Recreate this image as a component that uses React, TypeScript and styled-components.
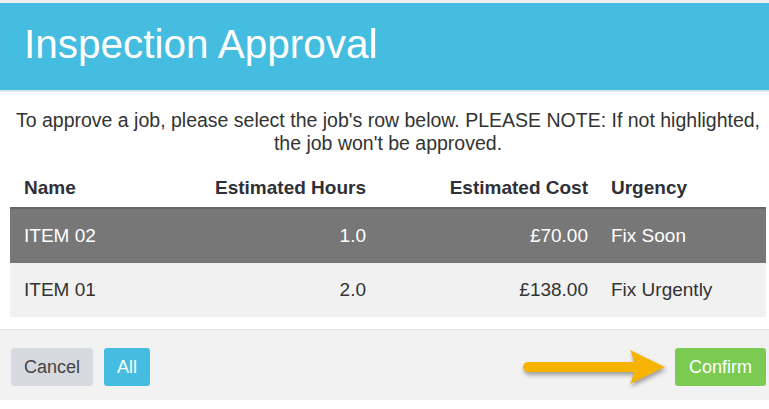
import styled, { createGlobalStyle, css } from "styled-components";

const GlobalStyle = createGlobalStyle`
  html, body {
    margin: 0;
    padding: 0;
    background: #fff;
  }
  body {
    font-family: "Liberation Sans", Arial, Helvetica, sans-serif;
    color: #333;
  }
  * {
    box-sizing: border-box;
  }
`;

interface Job {
  name: string;
  hours: string;
  cost: string;
  urgency: string;
  selected?: boolean;
}

const jobs: Job[] = [
  { name: "ITEM 02", hours: "1.0", cost: "£70.00", urgency: "Fix Soon", selected: true },
  { name: "ITEM 01", hours: "2.0", cost: "£138.00", urgency: "Fix Urgently" },
];

const Arrow = () => (
  <ArrowSvg width="150" height="44" viewBox="0 0 150 44">
    <line x1="11" y1="22" x2="118" y2="22" stroke="#F6B400" strokeWidth="10" strokeLinecap="round" />
    <path d="M113 5 L148 22 L113 39 Q121 22 113 5 Z" fill="#F6B400" />
  </ArrowSvg>
);

export default function App() {
  return (
    <>
      <GlobalStyle />
      <Modal>
        <Header>
          <Title>Inspection Approval</Title>
        </Header>
        <Body>
          <Note>
            To approve a job, please select the job's row below. PLEASE NOTE: If not highlighted,
            <br />
            the job won't be approved.
          </Note>
          <Table>
            <HeadRow>
              <Cell>Name</Cell>
              <Cell $right>Estimated Hours</Cell>
              <Cell $right>Estimated Cost</Cell>
              <Cell>Urgency</Cell>
            </HeadRow>
            {jobs.map((job) => (
              <Row key={job.name} $selected={job.selected}>
                <Cell>{job.name}</Cell>
                <Cell $right>{job.hours}</Cell>
                <Cell $right>{job.cost}</Cell>
                <Cell>{job.urgency}</Cell>
              </Row>
            ))}
          </Table>
        </Body>
        <Footer>
          <Button $variant="cancel">Cancel</Button>
          <Button $variant="info">All</Button>
          <Spacer />
          <Arrow />
          <Button $variant="confirm">Confirm</Button>
        </Footer>
      </Modal>
    </>
  );
}

const Modal = styled.div`
  width: 769px;
  border-top: 3px solid #eceef0;
  display: flex;
  flex-direction: column;
`;

const Header = styled.header`
  height: 89px;
  background: #45bde1;
  border-bottom: 2px solid #dde7ee;
  display: flex;
  align-items: center;
  padding: 0 24px 4px;
`;

const Title = styled.h1`
  margin: 0;
  font-size: 40.5px;
  font-weight: 400;
  color: #fff;
`;

const Body = styled.section`
  padding: 17px 3px 0 10px;
`;

const Note = styled.p`
  margin: 0;
  font-size: 19.5px;
  line-height: 23px;
  text-align: center;
  color: #333;
`;

const Table = styled.div`
  margin-top: 10px;
  display: flex;
  flex-direction: column;
`;

const grid = css`
  display: grid;
  grid-template-columns: 183px 185px 222px 1fr;
  align-items: center;
`;

const HeadRow = styled.div`
  ${grid};
  height: 44px;
  border-bottom: 2px solid #666;
  padding-top: 4px;
  font-size: 19px;
  font-weight: 700;
  color: #2f3038;
`;

const Row = styled.div<{ $selected?: boolean }>`
  ${grid};
  height: 54px;
  font-size: 19px;
  background: ${(p) => (p.$selected ? "#777777" : "#f1f1f1")};
  color: ${(p) => (p.$selected ? "#fff" : "#333")};
`;

const Cell = styled.div<{ $right?: boolean }>`
  padding: 0 12px 0 14px;
  text-align: ${(p) => (p.$right ? "right" : "left")};
  white-space: nowrap;

  &:last-child {
    padding-left: 11px;
  }
`;

const Footer = styled.footer`
  margin-top: 12px;
  display: flex;
  align-items: center;
  gap: 11px;
  padding: 15px 3px 11px 11px;
  background: #f2f2f2;
  border-top: 1px solid #e4e4ea;
`;

const Spacer = styled.div`
  flex: 1;
`;

const ArrowSvg = styled.svg`
  margin-right: -3px;
  filter: drop-shadow(1px 3px 2px rgba(0, 0, 0, 0.35));
`;

const variants = {
  cancel: css`
    background: #d6d9df;
    color: #444;
  `,
  info: css`
    background: #45bde1;
    color: #fff;
  `,
  confirm: css`
    background: #7bcb52;
    color: #fff;
    padding: 0 14px;
  `,
};

const Button = styled.button<{ $variant: keyof typeof variants }>`
  height: 38px;
  padding: 0 13px;
  border: none;
  border-radius: 3px;
  font-family: inherit;
  font-size: 18px;
  cursor: pointer;
  ${(p) => variants[p.$variant]};
`;
